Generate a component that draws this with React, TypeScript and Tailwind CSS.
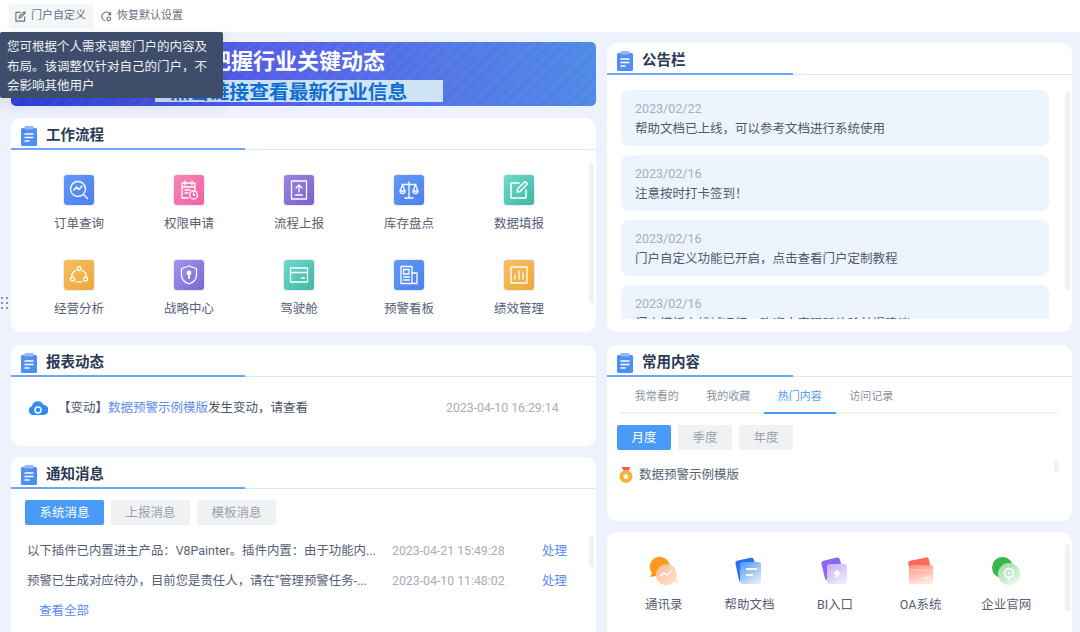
import type { ReactNode } from "react";

const strokeProps = {
  fill: "none",
  stroke: "white",
  strokeWidth: 1.3,
  strokeLinecap: "round" as const,
  strokeLinejoin: "round" as const,
};

function Glyph({ children }: { children: ReactNode }) {
  return (
    <svg width="22" height="22" viewBox="0 0 22 22" {...strokeProps}>
      {children}
    </svg>
  );
}

const flows = [
  {
    name: "订单查询",
    tile: "from-[#6199f6] to-[#4e80ee]",
    icon: (
      <Glyph>
        <circle cx="10" cy="10" r="7.5" />
        <path d="M6 11l2.5-3 2.5 2.500 3-3.500M15.500 15.500l4 4" />
      </Glyph>
    ),
  },
  {
    name: "权限申请",
    tile: "from-[#f884b9] to-[#f160a2]",
    icon: (
      <Glyph>
        <path d="M10 19H4V4h13v7M7 2v4M14 2v4M4 8h13M7 11h5M7 14h3" />
        <circle cx="15.500" cy="16" r="4" />
        <path d="M15.500 14v2h1.500" />
      </Glyph>
    ),
  },
  {
    name: "流程上报",
    tile: "from-[#9b86e6] to-[#7860ca]",
    icon: (
      <Glyph>
        <rect x="3.500" y="2" width="15" height="18" />
        <path d="M11 13V6.500M8 9l3-3 3 3M7.500 16h7" />
      </Glyph>
    ),
  },
  {
    name: "库存盘点",
    tile: "from-[#6199f6] to-[#4e80ee]",
    icon: (
      <Glyph>
        <path d="M11 3v15M7 19h8M4 5.500h14M4.500 6L2 12h5zM17.500 6L15 12h5zM2 12a2.500 2.500 0 0 0 5 0M15 12a2.500 2.500 0 0 0 5 0" />
      </Glyph>
    ),
  },
  {
    name: "数据填报",
    tile: "from-[#6cdccb] to-[#3fb6a6]",
    icon: (
      <Glyph>
        <path d="M11 4H3v15h15v-8" strokeWidth="1.500" />
        <path d="M9 13l.5-3L17 2.500l2.500 2.500L12 12.500z" strokeWidth="1.500" />
      </Glyph>
    ),
  },
  {
    name: "经营分析",
    tile: "from-[#f5bf63] to-[#eca734]",
    icon: (
      <Glyph>
        <circle cx="11" cy="4.500" r="2" />
        <circle cx="4.500" cy="15" r="2" />
        <circle cx="17.500" cy="15" r="2" />
        <path d="M7.500 6.500A8 8 0 0 0 3.500 12M14.500 6.500a8 8 0 0 1 4 5.500M8 17.800h6" />
      </Glyph>
    ),
  },
  {
    name: "战略中心",
    tile: "from-[#a395f1] to-[#7b68cf]",
    icon: (
      <Glyph>
        <path d="M11 2l7.500 2.500V11c0 4.500-3.500 7.500-7.500 9-4-1.500-7.500-4.500-7.500-9V4.500z" />
        <circle cx="11" cy="9" r="1.800" fill="white" />
        <path d="M11 10v4" strokeWidth="1.800" />
      </Glyph>
    ),
  },
  {
    name: "驾驶舱",
    tile: "from-[#6cdccb] to-[#3fb6a6]",
    icon: (
      <Glyph>
        <rect x="2.500" y="4" width="17" height="14" />
        <path d="M2.500 8.500h17M13.500 14h3" />
      </Glyph>
    ),
  },
  {
    name: "预警看板",
    tile: "from-[#6199f6] to-[#4e80ee]",
    icon: (
      <Glyph>
        <path d="M3 2.500h11v17H3zM14 9h5v10.500h-5" />
        <rect x="5.500" y="5.500" width="5.500" height="4.500" />
        <path d="M5.500 13h6M5.500 16h6" />
      </Glyph>
    ),
  },
  {
    name: "绩效管理",
    tile: "from-[#f6bf62] to-[#eda735]",
    icon: (
      <Glyph>
        <rect x="3" y="3" width="16" height="16" />
        <path d="M7 15v-4M11 15V7M15 15v-6" />
      </Glyph>
    ),
  },
];

const notices = [
  { date: "2023/02/22", text: "帮助文档已上线，可以参考文档进行系统使用" },
  { date: "2023/02/16", text: "注意按时打卡签到！" },
  { date: "2023/02/16", text: "门户自定义功能已开启，点击查看门户定制教程" },
  { date: "2023/02/16", text: "门户模板上线试运行，欢迎大家踊跃体验并提建议" },
];

const messages = [
  { text: "以下插件已内置进主产品：V8Painter。插件内置：由于功能内...", time: "2023-04-21 15:49:28" },
  { text: "预警已生成对应待办，目前您是责任人，请在“管理预警任务-...", time: "2023-04-10 11:48:02" },
];

function ClipboardIcon() {
  return (
    <svg width="18" height="20" viewBox="0 0 18 20">
      <rect x="1" y="2" width="16" height="18" rx="1.500" fill="#4f8ef7" />
      <rect x="4.500" y="0" width="9" height="3.500" rx="1" fill="#8fb8fa" />
      <path d="M4.500 8h9M4.500 11.500h9M4.500 15h5" stroke="white" strokeWidth="1.500" />
    </svg>
  );
}

function Card({ title, className, children }: { title: string; className: string; children: ReactNode }) {
  return (
    <section className={`shrink-0 overflow-hidden rounded-[10px] bg-white ${className}`}>
      <div className="flex h-[30px] items-center gap-[8px] pt-[5px] pl-[9px]">
        <ClipboardIcon />
        <h2 className="text-[14.500px] font-bold text-[#2b3a55]">{title}</h2>
      </div>
      <div className="flex h-[2px] items-end">
        <div className="h-[2px] w-2/5 bg-[#6fa5f7]" />
        <div className="h-px flex-1 bg-[#dbe8fd]" />
      </div>
      {children}
    </section>
  );
}

function Pill({ label, active, width }: { label: string; active?: boolean; width: string }) {
  return (
    <div
      className={`flex h-[25px] items-center justify-center rounded-[2px] pt-[2px] text-[12.500px] ${width} ${
        active ? "bg-[#4a9bf8] text-white" : "bg-[#f0f1f3] text-[#9aa2ad]"
      }`}
    >
      {label}
    </div>
  );
}

function ChatIcon() {
  return (
    <svg width="30" height="30" viewBox="0 0 30 30">
      <defs>
        <linearGradient id="chatBack" x1="0" y1="0" x2="1" y2="1">
          <stop offset="0" stopColor="#ffb98a" />
          <stop offset="1" stopColor="#ffe6d8" />
        </linearGradient>
      </defs>
      <path d="M1 21l2-4a10 10 0 1 1 4 3z" fill="#fb9a1e" />
      <path d="M29 28l-4-2a10.500 10.500 0 1 1 2-3z" fill="url(#chatBack)" />
      <path d="M11 20l4-3 3 2 5-5" stroke="white" strokeWidth="1.500" fill="none" />
    </svg>
  );
}

function DocIcon() {
  return (
    <svg width="30" height="30" viewBox="0 0 30 30">
      <defs>
        <linearGradient id="docFront" x1="0" y1="0" x2="0.600" y2="1">
          <stop offset="0" stopColor="#4a96fa" />
          <stop offset="1" stopColor="#d8e9fe" />
        </linearGradient>
      </defs>
      <rect x="3" y="3" width="19" height="22" rx="3" fill="#2f6ff0" transform="rotate(-12 12 14)" />
      <rect x="6" y="6" width="21" height="22" rx="3" fill="url(#docFront)" />
      <path d="M12 13h11M12 19h7" stroke="white" strokeWidth="2" />
    </svg>
  );
}

function BiIcon() {
  return (
    <svg width="30" height="30" viewBox="0 0 30 30">
      <defs>
        <linearGradient id="biFront" x1="0" y1="0" x2="0.600" y2="1">
          <stop offset="0" stopColor="#c4b0f8" />
          <stop offset="1" stopColor="#ece6fd" />
        </linearGradient>
      </defs>
      <rect x="3" y="3" width="19" height="20" rx="3" fill="#8f67f0" transform="rotate(-14 12 13)" />
      <rect x="7" y="8" width="20" height="20" rx="3" fill="url(#biFront)" />
      <path d="M17 14l4 4h-2.500v3h-3v-3H13z" fill="white" />
    </svg>
  );
}

function OaIcon() {
  return (
    <svg width="30" height="30" viewBox="0 0 30 30">
      <defs>
        <linearGradient id="oaFront" x1="0" y1="0" x2="0.300" y2="1">
          <stop offset="0" stopColor="#ff8f7c" />
          <stop offset="1" stopColor="#ffe3dc" />
        </linearGradient>
      </defs>
      <rect x="3" y="3" width="21" height="14" rx="2.500" fill="#fb6a58" transform="rotate(-12 13 10)" />
      <rect x="3" y="9" width="24" height="19" rx="2.500" fill="url(#oaFront)" />
      <path d="M4 14h22" stroke="#ffd6ce" strokeWidth="1" />
      <path d="M17 22h7" stroke="white" strokeWidth="1.500" strokeDasharray="2 1" />
    </svg>
  );
}

function SiteIcon() {
  return (
    <svg width="30" height="30" viewBox="0 0 30 30">
      <defs>
        <linearGradient id="siteFront" x1="0" y1="0" x2="0.600" y2="1">
          <stop offset="0" stopColor="#8fdca0" />
          <stop offset="1" stopColor="#e2f8e6" />
        </linearGradient>
      </defs>
      <circle cx="11.500" cy="11.500" r="10.500" fill="#39b54a" />
      <circle cx="18" cy="18" r="11" fill="url(#siteFront)" />
      <circle cx="18" cy="17" r="4.500" fill="none" stroke="white" strokeWidth="1.800" />
      <circle cx="18" cy="17" r="1.300" fill="white" />
      <path d="M18 21v4" stroke="white" strokeWidth="1.500" />
    </svg>
  );
}

const links = [
  { name: "通讯录", icon: <ChatIcon /> },
  { name: "帮助文档", icon: <DocIcon /> },
  { name: "BI入口", icon: <BiIcon /> },
  { name: "OA系统", icon: <OaIcon /> },
  { name: "企业官网", icon: <SiteIcon /> },
];

export default function App() {
  return (
    <div className="relative flex h-[632px] w-[1080px] flex-col overflow-hidden bg-[#eef2fd] font-['Roboto','Noto_Sans_CJK_SC',sans-serif]">
      <header className="flex h-8 shrink-0 items-center bg-white pl-[9px] text-[11px] text-[#667085]">
        <div className="flex h-6 w-[85px] items-center gap-[5px] rounded-[2px] bg-[#f5f6f8] pl-[6px]">
          <svg width="11" height="11" viewBox="0 0 12 12" fill="none" stroke="#667085" strokeWidth="1.200">
            <path d="M6 1.500H1v9.500h9.500V6M4.500 7.500l.4-2L10 .8l1.200 1.200-5 5z" />
          </svg>
          门户自定义
        </div>
        <div className="ml-[7px] flex items-center gap-[5px]">
          <svg width="11" height="11" viewBox="0 0 12 12" fill="none" stroke="#667085" strokeWidth="1.200">
            <path d="M10.500 4A5 5 0 1 0 5 11M10.500 1v3h-3" />
            <circle cx="8.500" cy="8.500" r="2" />
          </svg>
          恢复默认设置
        </div>
      </header>

      <main className="flex flex-1 gap-[11px] overflow-hidden pl-[11px]">
        <div className="flex w-[585px] shrink-0 flex-col pt-[10px]">
          <div className="flex h-16 shrink-0 flex-col overflow-hidden rounded-[5px] bg-[repeating-linear-gradient(135deg,rgba(255,255,255,0.04)_0_3px,transparent_3px_9px),linear-gradient(80deg,#2a3ed8,#5560e6_45%,#4f8ae6)] pl-[144px] pt-[7px]">
            <div className="pl-[54px] text-[22px] leading-[26px] font-bold text-white">把握行业关键动态</div>
            <div className="mt-[5px] h-[22px] w-[288px] bg-[#cfe3f6] pl-[15px] text-[19.800px] leading-[25px] font-bold whitespace-nowrap text-[#0f6fd1]">
              点击链接查看最新行业信息
            </div>
          </div>

          <Card title="工作流程" className="mt-3 h-[214px]">
            <div className="flex">
              <div className="ml-[13px] grid w-[550px] shrink-0 grid-cols-5 pt-[25px]">
                {flows.map((flow) => (
                  <div key={flow.name} className="flex h-[85px] flex-col items-center">
                    <div className={`flex size-[30px] items-center justify-center rounded-[3px] bg-linear-to-br shadow-[0_0_0_1px_rgba(130,150,240,0.18)] ${flow.tile}`}>
                      {flow.icon}
                    </div>
                    <span className="mt-[10px] text-[12.500px] leading-[18px] text-[#566175]">{flow.name}</span>
                  </div>
                ))}
              </div>
              <div className="mt-[13px] ml-[15px] h-[140px] w-[5px] rounded-full bg-[#f0f1f3]" />
            </div>
          </Card>

          <Card title="报表动态" className="mt-[13px] h-[101px]">
            <div className="flex items-center pt-[21px] pl-[17px] text-[12.500px] leading-[20px]">
              <svg width="20" height="18" viewBox="0 0 20 18">
                <path d="M5 16a4.500 4.500 0 0 1-1-8.800A6 6 0 0 1 15.500 6 5 5 0 0 1 15.500 16z" fill="#2f8cf0" />
                <circle cx="10" cy="11" r="3" fill="none" stroke="white" strokeWidth="1.500" />
              </svg>
              <span className="ml-[10px] w-[388px] text-[#4b5568]">
                【变动】<span className="text-[#5b8def]">数据预警示例模版</span>发生变动，请查看
              </span>
              <span className="text-[12.300px] text-[#a6aeba]">2023-04-10 16:29:14</span>
            </div>
          </Card>

          <Card title="通知消息" className="mt-[11px] h-[190px]">
            <div className="flex">
              <div className="w-[578px] shrink-0">
                <div className="flex gap-[7px] pt-[11px] pl-[14px]">
                  <Pill label="系统消息" active width="w-[79px]" />
                  <Pill label="上报消息" width="w-[79px]" />
                  <Pill label="模板消息" width="w-[79px]" />
                </div>
                <div className="pt-[11px] text-[12.500px]">
                  {messages.map((msg) => (
                    <div key={msg.time} className="flex h-[30px] items-center pl-[16px]">
                      <span className="w-[365px] shrink-0 text-[12.400px] whitespace-nowrap text-[#566175]">{msg.text}</span>
                      <span className="w-[150px] shrink-0 text-[12.300px] text-[#a6aeba]">{msg.time}</span>
                      <span className="text-[#5b8def]">处理</span>
                    </div>
                  ))}
                  <div className="flex h-[30px] items-center pl-[28px] text-[#5b8def]">查看全部</div>
                </div>
              </div>
              <div className="mt-[46px] h-[32px] w-[5px] rounded-full bg-[#f0f1f3]" />
            </div>
          </Card>
        </div>

        <div className="flex w-[465px] shrink-0 flex-col pt-[11px]">
          <Card title="公告栏" className="h-[289px]">
            <div className="flex">
              <div className="ml-[14px] flex h-[244px] w-[428px] shrink-0 flex-col gap-[9px] overflow-hidden pt-[15px]">
                {notices.map((item) => (
                  <div key={item.text} className="flex h-[56px] shrink-0 flex-col justify-center rounded-[8px] bg-[#eef4fe] pt-[1px] pl-[14px] text-[12.500px] leading-[20px]">
                    <span className="text-[#a3aec0]">{item.date}</span>
                    <span className="text-[#4b5a70]">{item.text}</span>
                  </div>
                ))}
              </div>
              <div className="mt-[17px] ml-[16px] h-[198px] w-[5px] rounded-full bg-[#f0f1f3]" />
            </div>
          </Card>

          <Card title="常用内容" className="mt-[13px] h-[176px]">
            <div className="relative mx-[14px] flex h-[37px] border-b-2 border-[#f0f1f3] pt-[5px] text-[11px] text-[#8a93a1]">
              <div className="flex w-[71.500px] items-center justify-center">我常看的</div>
              <div className="flex w-[71.500px] items-center justify-center">我的收藏</div>
              <div className="-mt-[5px] -mb-[2px] flex w-[71.500px] items-center justify-center border-b-2 border-[#4a9bf8] pt-[5px] text-[#4a9bf8]">热门内容</div>
              <div className="flex w-[71.500px] items-center justify-center">访问记录</div>
            </div>
            <div className="flex gap-[7px] pt-[11px] pl-[10px]">
              <Pill label="月度" active width="w-[54px]" />
              <Pill label="季度" width="w-[54px]" />
              <Pill label="年度" width="w-[54px]" />
            </div>
            <div className="flex items-start pl-[12px]">
              <div className="mt-[16px] flex items-center gap-[6px] text-[12.500px] text-[#566175]">
                <svg width="14" height="16" viewBox="0 0 14 16">
                  <path d="M2.500 0l3 5h3l3-5" fill="#ee5d43" />
                  <circle cx="7" cy="9.500" r="6.500" fill="#f9b233" />
                  <path d="M7 6l1 2.300 2.400.2-1.800 1.600.6 2.400L7 11.200l-2.200 1.300.6-2.400L3.600 8.500 6 8.300z" fill="white" />
                </svg>
                数据预警示例模版
              </div>
              <div className="mt-[11px] ml-[315px] h-[11px] w-[5px] rounded-full bg-[#f0f1f3]" />
            </div>
          </Card>

          <section className="mt-[11px] flex h-[120px] shrink-0 rounded-t-[10px] bg-white">
            <div className="ml-[14px] grid w-[428px] shrink-0 grid-cols-5 pt-[25px]">
              {links.map((link) => (
                <div key={link.name} className="flex flex-col items-center">
                  <div className="flex h-[28px] items-center justify-center">{link.icon}</div>
                  <span className="mt-[11px] text-[12.500px] leading-[18px] text-[#566175]">{link.name}</span>
                </div>
              ))}
            </div>
            <div className="mt-[12px] ml-[16px] h-[67px] w-[5px] rounded-full bg-[#f0f1f3]" />
          </section>
        </div>

        <div className="ml-auto h-[288px] w-[5px] shrink-0 bg-[#e3e7f2]" />
      </main>

      {/* tooltip over the banner */}
      <div className="absolute top-[32px] left-0 h-[66px] w-[223px] rounded-[2px] bg-[#3e4e6a] px-[7px] pt-[5px] text-[12.500px] leading-[19.500px] text-[#eef1f6] shadow-[0_6px_16px_rgba(60,70,110,0.15)]">
        您可根据个人需求调整门户的内容及布局。该调整仅针对自己的门户，不会影响其他用户
      </div>

      {/* drag handle */}
      <div className="absolute top-[297px] left-[1px] grid grid-cols-2 gap-x-[3px] gap-y-[3px]">
        {[0, 1, 2, 3, 4, 5].map((dot) => (
          <span key={dot} className="size-[2px] bg-[#8a93a1]" />
        ))}
      </div>
    </div>
  );
}
